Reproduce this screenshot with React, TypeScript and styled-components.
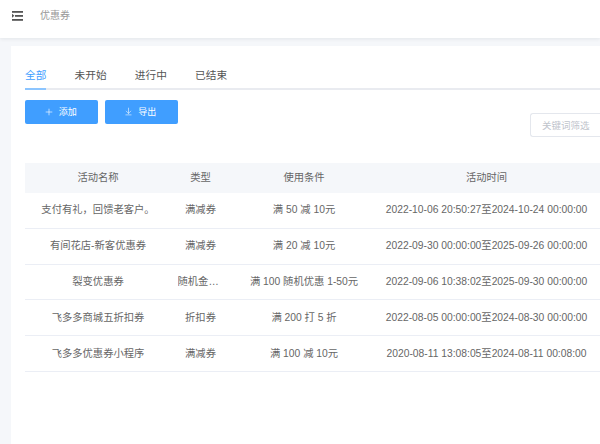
import React from 'react';
import styled, { createGlobalStyle } from 'styled-components';
import { Plus, ArrowDownToLine } from 'lucide-react';

const GlobalStyle = createGlobalStyle`
    html, body {
        margin: 0;
        padding: 0;
        background-color: #f5f7fa;
        overflow: hidden;
    }
    body {
        font-family: "Liberation Sans", "Noto Sans CJK SC", sans-serif;
    }
`;

const tabs = ['全部', '未开始', '进行中', '已结束'];

const coupons = [
    { name: '支付有礼，回馈老客户。', type: '满减券', rule: '满 50 减 10元', time: '2022-10-06 20:50:27至2024-10-24 00:00:00' },
    { name: '有间花店-新客优惠券', type: '满减券', rule: '满 20 减 10元', time: '2022-09-30 00:00:00至2025-09-26 00:00:00' },
    { name: '裂变优惠券', type: '随机金额券', rule: '满 100 随机优惠 1-50元', time: '2022-09-06 10:38:02至2025-09-30 00:00:00' },
    { name: '飞多多商城五折扣券', type: '折扣券', rule: '满 200 打 5 折', time: '2022-08-05 00:00:00至2024-08-30 00:00:00' },
    { name: '飞多多优惠券小程序', type: '满减券', rule: '满 100 减 10元', time: '2020-08-11 13:08:05至2024-08-11 00:08:00' },
];

const MenuIcon = () => (
    <svg width="12" height="10" viewBox="0 0 12 10" fill="none">
        <rect x="0" y="0" width="11" height="1.8" fill="#555" />
        <rect x="3" y="4" width="8" height="1.8" fill="#555" />
        <path d="M0 2.8 L2.4 4.8 L0 6.8 Z" fill="#555" />
        <rect x="0" y="8" width="11" height="1.8" fill="#555" />
    </svg>
);

const App: React.FC = () => {
    return (
        <Page>
            <GlobalStyle />
            <Header>
                <MenuIcon />
                <PageTitle>优惠券</PageTitle>
            </Header>
            <Card>
                <TabBar>
                    {tabs.map((tab, i) => (
                        <Tab key={tab} $active={i === 0}>{tab}</Tab>
                    ))}
                </TabBar>
                <Toolbar>
                    <ActionButton><Plus size={10} strokeWidth={1.5} />添加</ActionButton>
                    <ActionButton><ArrowDownToLine size={9} strokeWidth={1.5} />导出</ActionButton>
                </Toolbar>
                <FilterRow>
                    <FilterInput placeholder="关键词筛选" />
                </FilterRow>
                <Table>
                    <HeadRow>
                        <HeadCell>活动名称</HeadCell>
                        <HeadCell>类型</HeadCell>
                        <HeadCell>使用条件</HeadCell>
                        <HeadCell>活动时间</HeadCell>
                    </HeadRow>
                    {coupons.map(c => (
                        <BodyRow key={c.name}>
                            <BodyCell>{c.name}</BodyCell>
                            <BodyCell><Ellipsis>{c.type}</Ellipsis></BodyCell>
                            <BodyCell>{c.rule}</BodyCell>
                            <BodyCell>{c.time}</BodyCell>
                        </BodyRow>
                    ))}
                </Table>
            </Card>
        </Page>
    );
};

const Page = styled.div`
    width: 600px;
    height: 444px;
    overflow: hidden;
`;

const Header = styled.header`
    height: 38px;
    box-sizing: border-box;
    padding: 11px 0 0 12px;
    display: flex;
    align-items: flex-start;
    gap: 16px;
    background-color: #fff;
    box-shadow: 0 1px 4px rgba(0, 21, 41, 0.08);
`;

const PageTitle = styled.div`
    font-size: 10px;
    line-height: 10px;
    color: #999;
`;

const Card = styled.main`
    margin: 8px 0 0 11px;
    height: 398px;
    box-sizing: border-box;
    padding: 19px 0 0 14px;
    background-color: #fff;
`;

const TabBar = styled.div`
    display: flex;
    gap: 28.2px;
    height: 23px;
    border-bottom: 2px solid #e9ebf0;
`;

const Tab = styled.div<{ $active?: boolean }>`
    height: 23px;
    font-size: 10.7px;
    line-height: 20px;
    color: ${p => (p.$active ? '#409eff' : '#555')};
    ${p => p.$active && 'border-bottom: 2px solid #8cc5ff;'}
`;

const Toolbar = styled.div`
    display: flex;
    gap: 7.5px;
    margin-top: 10px;
`;

const ActionButton = styled.button`
    width: 72.5px;
    height: 24px;
    padding: 0 2px 1px 0;
    border: none;
    border-radius: 2px;
    background-color: #409eff;
    color: #fff;
    font-family: inherit;
    font-size: 9px;
    display: flex;
    align-items: center;
    justify-content: center;
    gap: 5px;
`;

const FilterRow = styled.div`
    display: flex;
    justify-content: flex-end;
    margin-top: -11px;
    height: 24px;
`;

const FilterInput = styled.input`
    width: 75px;
    height: 24px;
    box-sizing: border-box;
    margin-right: -5px;
    padding: 0 11px;
    border: 1px solid #e4e7ed;
    border-right: none;
    border-radius: 3px 0 0 3px;
    font-family: inherit;
    font-size: 9.5px;
    outline: none;

    &::placeholder {
        color: #c0c4cc;
    }
`;

const Table = styled.div`
    width: 575px;
    margin-top: 26px;
`;

const HeadRow = styled.div`
    display: grid;
    grid-template-columns: 146px 59px 148px 217px 5px;
    height: 30px;
    box-sizing: border-box;
    padding-bottom: 3px;
    align-items: center;
    background-color: #f5f7fa;
`;

const HeadCell = styled.div`
    color: #666;
    font-size: 10.3px;
    text-align: center;
`;

const BodyRow = styled.div`
    display: grid;
    grid-template-columns: 146px 59px 148px 217px 5px;
    height: 35.8px;
    box-sizing: border-box;
    padding-bottom: 3px;
    align-items: center;
    border-bottom: 1px solid #ebeef5;
`;

const BodyCell = styled.div`
    color: #666;
    font-size: 10.3px;
    text-align: center;
    white-space: nowrap;
`;

const Ellipsis = styled.div`
    width: 46px;
    margin: 0 auto;
    overflow: hidden;
    text-overflow: ellipsis;
    white-space: nowrap;
`;

export default App;
